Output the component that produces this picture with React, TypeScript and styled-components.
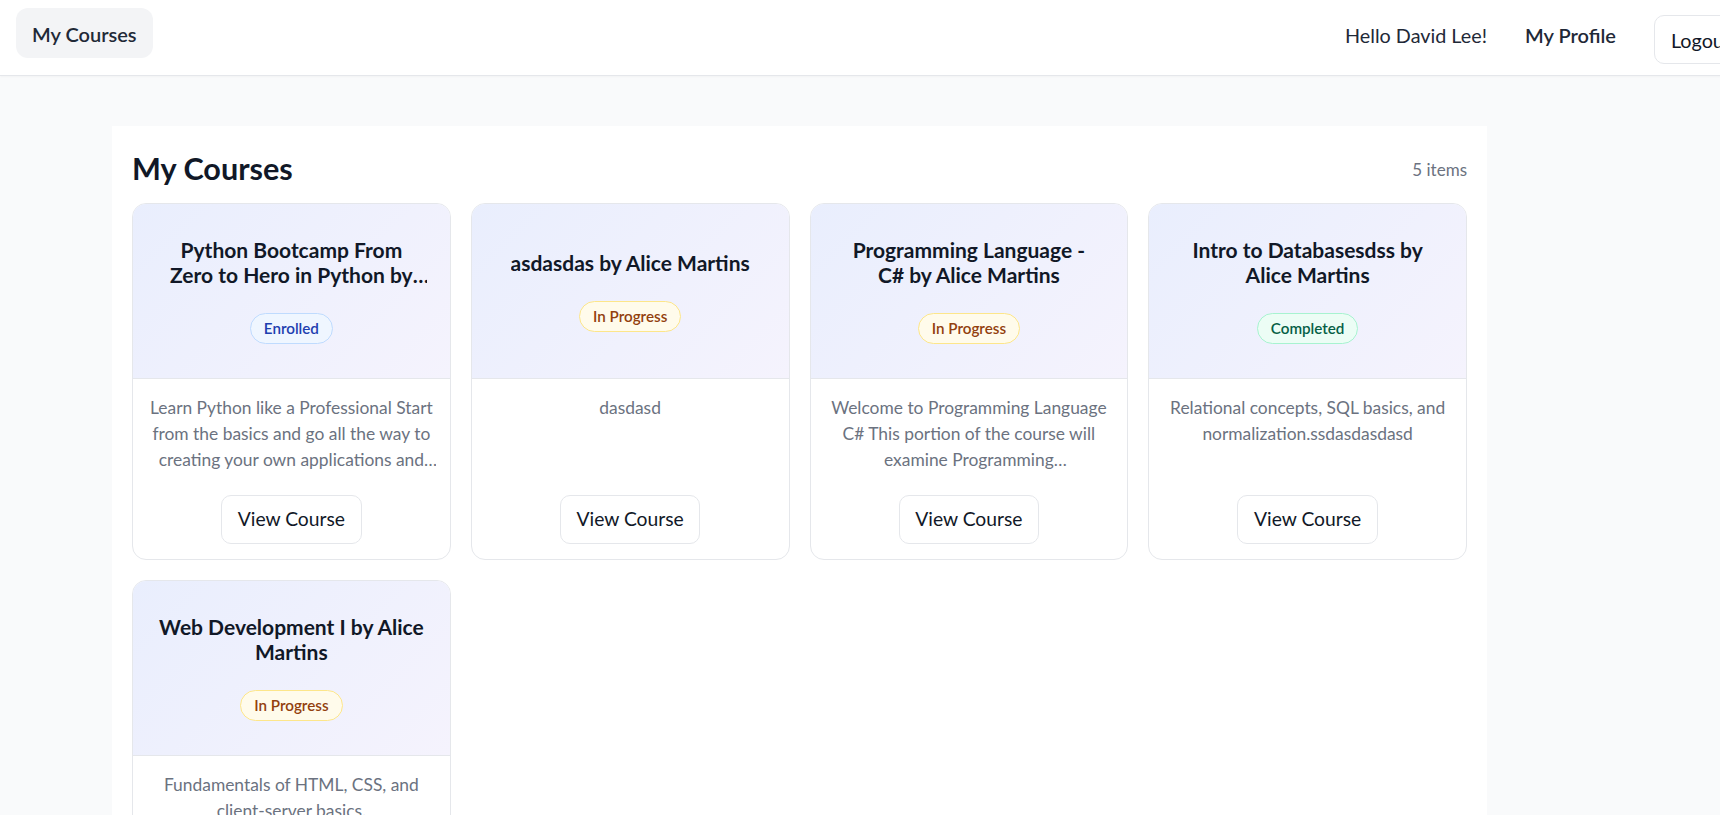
import React from "react";
import styled, { createGlobalStyle } from "styled-components";

const GlobalStyle = createGlobalStyle`
  html, body {
    margin: 0;
    padding: 0;
    overflow-x: hidden;
  }
  body {
    font-family: "Lato", "Noto Sans", sans-serif;
    background: #f9fafb;
    color: #111827;
  }
  * { box-sizing: border-box; }
`;

const Page = styled.div`
  min-height: 815px;
  overflow: hidden;
`;

const Header = styled.header`
  display: flex;
  justify-content: space-between;
  align-items: flex-start;
  width: 1764px;
  height: 76px;
  padding: 8px 16px 0;
  background: #ffffff;
  border-bottom: 1px solid #e5e7eb;
  box-shadow: 0 1px 2px rgba(17, 24, 39, 0.03);
`;

const NavTab = styled.a`
  display: inline-flex;
  align-items: center;
  height: 50px;
  padding: 11px 16px 9px;
  border-radius: 12px;
  background: #f3f4f6;
  color: #1f2937;
  font-size: 20px;
  font-weight: 600;
  line-height: 30px;
  text-decoration: none;
`;

const UserNav = styled.nav`
  display: flex;
  align-items: flex-start;
  gap: 38px;
`;

const Greeting = styled.span`
  margin-top: 12px;
  font-size: 19.8px;
  line-height: 30px;
  color: #1f2937;
`;

const ProfileLink = styled.a`
  margin-top: 12px;
  font-size: 20px;
  font-weight: 600;
  line-height: 30px;
  color: #1f2937;
  text-decoration: none;
`;

const LogoutButton = styled.button`
  margin-top: 7px;
  padding: 8.5px 16px;
  border: 1px solid #e5e7eb;
  border-radius: 10px;
  background: #ffffff;
  font-family: inherit;
  font-size: 19.8px;
  line-height: 30px;
  color: #111827;
`;

const Main = styled.main`
  padding: 50px 0 0 112px;
`;

const Panel = styled.section`
  width: 1375px;
  min-height: 700px;
  padding: 25px 20px 20px;
  background: #ffffff;
`;

const PanelHead = styled.div`
  display: flex;
  justify-content: space-between;
  align-items: center;
  margin-bottom: 15px;
`;

const Title = styled.h1`
  margin: 0;
  font-size: 30.6px;
  font-weight: 700;
  line-height: 1.2;
  color: #111827;
`;

const Count = styled.span`
  font-size: 17px;
  line-height: 25.5px;
  color: #6b7280;
`;

const Grid = styled.div`
  display: grid;
  grid-template-columns: repeat(4, 1fr);
  gap: 20px;
`;

const Card = styled.article`
  display: flex;
  flex-direction: column;
  border: 1px solid #e5e7eb;
  border-radius: 14px;
  overflow: hidden;
  background: #ffffff;
`;

const CardTop = styled.div`
  display: flex;
  flex-direction: column;
  align-items: center;
  justify-content: center;
  gap: 26px;
  height: 175px;
  padding: 0 23px;
  background: linear-gradient(135deg, #e9eefd 0%, #f5f3fd 100%);
  border-bottom: 1px solid #e5e7eb;
  text-align: center;
`;

const CourseName = styled.h2`
  margin: 0;
  font-size: 21px;
  font-weight: 700;
  line-height: 25px;
  color: #111827;
  display: -webkit-box;
  -webkit-line-clamp: 2;
  -webkit-box-orient: vertical;
  overflow: hidden;
`;

type Status = "Enrolled" | "In Progress" | "Completed";

const badgeColors: Record<Status, { bg: string; border: string; fg: string }> = {
  Enrolled: { bg: "#eff6ff", border: "#bfdbfe", fg: "#1e40af" },
  "In Progress": { bg: "#fffbeb", border: "#fde68a", fg: "#92400e" },
  Completed: { bg: "#ecfdf5", border: "#a7f3d0", fg: "#065f46" },
};

const Badge = styled.span<{ $status: Status }>`
  display: inline-block;
  padding: 4px 13px;
  border-radius: 999px;
  border: 1px solid ${(p) => badgeColors[p.$status].border};
  background: ${(p) => badgeColors[p.$status].bg};
  color: ${(p) => badgeColors[p.$status].fg};
  font-size: 15.2px;
  font-weight: 600;
  line-height: 21px;
`;

const CardBody = styled.div`
  display: flex;
  flex-direction: column;
  align-items: center;
  gap: 22px;
  padding: 16px 14px 15px;
`;

const Description = styled.p`
  margin: 0;
  width: 100%;
  min-height: 78px;
  font-size: 17.4px;
  line-height: 26px;
  color: #6b7280;
  text-align: center;
  display: -webkit-box;
  -webkit-line-clamp: 3;
  -webkit-box-orient: vertical;
  overflow: hidden;
`;

const ViewButton = styled.button`
  padding: 8.5px 15.5px;
  border: 1px solid #e5e7eb;
  border-radius: 10px;
  background: #ffffff;
  font-family: inherit;
  font-size: 19.3px;
  line-height: 30px;
  color: #111827;
`;

const NB = "\u00a0";

const courses: { title: string; status: Status; description: string }[] = [
  {
    title: `Python Bootcamp From Zero${NB}to Hero in Python by Alice Martins`,
    status: "Enrolled",
    description:
      "Learn Python like a Professional Start from the basics and go all the way to creating your own applications and games",
  },
  {
    title: "asdasdas by Alice Martins",
    status: "In Progress",
    description: "dasdasd",
  },
  {
    title: `Programming Language - C#${NB}by Alice Martins`,
    status: "In Progress",
    description: `Welcome to Programming Language C# This portion of the course will examine Programming Language${NB}C#${NB}in${NB}depth.`,
  },
  {
    title: "Intro to Databasesdss by Alice Martins",
    status: "Completed",
    description: "Relational concepts, SQL basics, and normalization.ssdasdasdasd",
  },
  {
    title: "Web Development I by Alice Martins",
    status: "In Progress",
    description: "Fundamentals of HTML, CSS, and client-server basics.",
  },
];

export default function App() {
  return (
    <Page>
      <GlobalStyle />
      <Header>
        <NavTab href="#">My Courses</NavTab>
        <UserNav>
          <Greeting>Hello David Lee!</Greeting>
          <ProfileLink href="#">My Profile</ProfileLink>
          <LogoutButton>Logout</LogoutButton>
        </UserNav>
      </Header>
      <Main>
        <Panel>
          <PanelHead>
            <Title>My Courses</Title>
            <Count>{courses.length} items</Count>
          </PanelHead>
          <Grid>
            {courses.map((c) => (
              <Card key={c.title}>
                <CardTop>
                  <CourseName>{c.title}</CourseName>
                  <Badge $status={c.status}>{c.status}</Badge>
                </CardTop>
                <CardBody>
                  <Description>{c.description}</Description>
                  <ViewButton>View Course</ViewButton>
                </CardBody>
              </Card>
            ))}
          </Grid>
        </Panel>
      </Main>
    </Page>
  );
}
